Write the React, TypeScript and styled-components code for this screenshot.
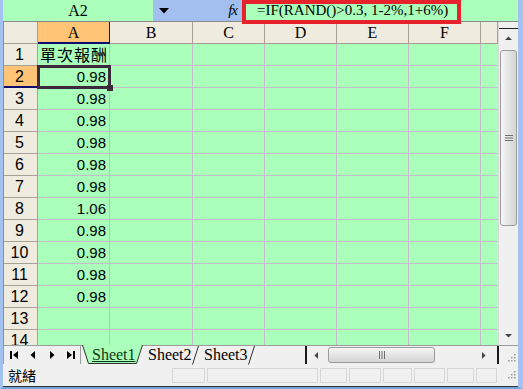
import * as React from 'react';
import styled, { createGlobalStyle, css } from 'styled-components';

const GREEN = '#aaffbb';
const GRID = '#c9bcc9';
const HEAD = '#efebde';
const HEAD_LINE = '#a5a294';
const ORANGE = '#ffc475';
const NAVY = '#0c0c70';
const FRAME = '#a4c2f0';
const BAR = '#f0f0f0';
const SERIF = '"Liberation Serif", "Noto Sans CJK TC", serif';
const SANS = '"Liberation Sans", "Noto Sans CJK TC", sans-serif';
const CJK = '"Noto Sans CJK TC", "Liberation Sans", sans-serif';

const columns = ['A', 'B', 'C', 'D', 'E', 'F', ''];
const rows = Array.from({ length: 14 }, (_, i) => i + 1);
const values: Record<number, string> = {
    1: '單次報酬',
    2: '0.98', 3: '0.98', 4: '0.98', 5: '0.98', 6: '0.98', 7: '0.98',
    8: '1.06', 9: '0.98', 10: '0.98', 11: '0.98', 12: '0.98',
};
const statusPanels = [33, 111, 27, 32, 29, 31, 27, 21];

const GlobalStyle = createGlobalStyle`
    html, body {
        margin: 0;
        padding: 0;
        background: #fff;
    }
    body {
        font-family: ${SANS};
    }
`;

const Arrow = ({ dir }: { dir: 'up' | 'down' | 'left' | 'right' }) => {
    const pts = {
        up: '0,5 3.5,1.5 7,5',
        down: '0,2 7,2 3.5,5.5',
        left: '5,0 5,7 1.5,3.5',
        right: '2,0 2,7 5.5,3.5',
    }[dir];
    return (
        <svg width="7" height="7" viewBox="0 0 7 7">
            <polygon points={pts} fill="#444" />
        </svg>
    );
};

const NavIcon = ({ kind }: { kind: 'first' | 'prev' | 'next' | 'last' }) => (
    <svg width="10" height="10" viewBox="0 0 10 10">
        {kind === 'first' && <rect x="1" y="1" width="2" height="8" fill="#000" />}
        {kind === 'first' && <polygon points="9,1 9,9 4,5" fill="#000" />}
        {kind === 'prev' && <polygon points="7,1 7,9 2.5,5" fill="#000" />}
        {kind === 'next' && <polygon points="3,1 3,9 7.5,5" fill="#000" />}
        {kind === 'last' && <polygon points="1,1 1,9 6,5" fill="#000" />}
        {kind === 'last' && <rect x="7" y="1" width="2" height="8" fill="#000" />}
    </svg>
);

const Grip = () => (
    <svg width="10" height="10" viewBox="0 0 10 10">
        {[[8, 2], [5, 5], [8, 5], [2, 8], [5, 8], [8, 8]].map(([x, y]) => (
            <rect key={`${x}-${y}`} x={x} y={y} width="1.5" height="1.5" fill="#9a9a9a" />
        ))}
    </svg>
);

const ThumbGrip = ({ vertical }: { vertical?: boolean }) => (
    <svg width={vertical ? 8 : 8} height="8" viewBox="0 0 8 8">
        {[1, 3.5, 6].map((p) =>
            vertical
                ? <rect key={p} x="0" y={p} width="8" height="1" fill="#6f6f6f" />
                : <rect key={p} x={p} y="0" width="1" height="8" fill="#6f6f6f" />
        )}
    </svg>
);

const TabShape = ({ active }: { active?: boolean }) => (
    <TabSvg width="62" height="19" viewBox="0 0 62 19">
        {active && <polygon points="0.5,0 60.5,0 54.5,18.5 6.5,18.5" fill={GREEN} />}
        {active && <polyline points="0.5,0 6.5,18.5 54.5,18.5" fill="none" stroke="#333" strokeWidth="1" />}
        <line x1="54.5" y1="18.5" x2="60.5" y2="0" stroke="#333" strokeWidth="1" />
    </TabSvg>
);

export default function App() {
    return (
        <>
            <GlobalStyle />
            <Window>
                <FormulaBar>
                    <NameBox>A2</NameBox>
                    <NameDrop>
                        <svg width="10" height="6" viewBox="0 0 10 6">
                            <polygon points="0,0 10,0 5,5.5" fill="#000" />
                        </svg>
                        <Fx>fx</Fx>
                    </NameDrop>
                    <FormulaField>=IF(RAND()&gt;0.3, 1-2%,1+6%)</FormulaField>
                    <Highlight />
                </FormulaBar>

                <SheetArea>
                    <Grid>
                        <Corner />
                        {columns.map((c, i) => (
                            <ColHead key={i} $active={c === 'A'}>{c}</ColHead>
                        ))}
                        {rows.map((r) => (
                            <React.Fragment key={r}>
                                <RowHead $active={r === 2}>{r}</RowHead>
                                {columns.map((c, i) => (
                                    <Cell
                                        key={i}
                                        $num={r > 1}
                                        $selected={r === 2 && c === 'A'}
                                        $last={c === ''}
                                    >
                                        {c === 'A' ? values[r] || '' : ''}
                                    </Cell>
                                ))}
                            </React.Fragment>
                        ))}
                    </Grid>
                    <VScroll>
                        <SplitBox />
                        <VButton><Arrow dir="up" /></VButton>
                        <VTrack>
                            <VThumb><ThumbGrip vertical /></VThumb>
                        </VTrack>
                        <VButton><Arrow dir="down" /></VButton>
                    </VScroll>
                </SheetArea>

                <TabBar>
                    <NavButtons>
                        <NavButton><NavIcon kind="first" /></NavButton>
                        <NavButton><NavIcon kind="prev" /></NavButton>
                        <NavButton><NavIcon kind="next" /></NavButton>
                        <NavButton><NavIcon kind="last" /></NavButton>
                    </NavButtons>
                    <TabStrip>
                        {['Sheet1', 'Sheet2', 'Sheet3'].map((name, i) => (
                            <Tab key={name} $active={i === 0}>
                                <TabShape active={i === 0} />
                                <TabLabel $active={i === 0}>{name}</TabLabel>
                            </Tab>
                        ))}
                    </TabStrip>
                    <SplitLine />
                    <HScroll>
                        <HButton><Arrow dir="left" /></HButton>
                        <HTrack>
                            <HThumb><ThumbGrip /></HThumb>
                        </HTrack>
                        <HButton><Arrow dir="right" /></HButton>
                    </HScroll>
                    <SplitLine />
                    <GripBox><Grip /></GripBox>
                </TabBar>

                <StatusBar>
                    <Ready>就緒</Ready>
                    {statusPanels.map((w, i) => (
                        <StatusPanel key={i} $width={w} />
                    ))}
                    <GripBox><Grip /></GripBox>
                </StatusBar>
            </Window>
        </>
    );
}

const Window = styled.div`
    width: 523px;
    height: 389px;
    box-sizing: border-box;
    border-left: 3px solid ${FRAME};
    border-right: 5px solid ${FRAME};
    border-bottom: 2px solid #6fa6df;
    display: flex;
    flex-direction: column;
    background: ${BAR};
    overflow: hidden;
`;

const FormulaBar = styled.div`
    position: relative;
    z-index: 3;
    display: flex;
    height: 22px;
    box-sizing: border-box;
    border-bottom: 1px solid #8a8a8a;
    flex-shrink: 0;
`;

const NameBox = styled.div`
    width: 150px;
    background: ${GREEN};
    font: 16px ${SERIF};
    line-height: 21px;
    text-align: center;
`;

const NameDrop = styled.div`
    width: 90px;
    background: #a2bff0;
    display: flex;
    align-items: center;
    justify-content: space-between;
    padding: 0 2px 0 6px;
    box-sizing: border-box;
`;

const Fx = styled.span`
    font: italic 15px ${SERIF};
    letter-spacing: -1px;
    padding-right: 4px;
`;

const FormulaField = styled.div`
    flex: 1;
    background: ${GREEN};
    font: 15px ${SERIF};
    line-height: 21px;
    padding-left: 14px;
    white-space: nowrap;
`;

const Highlight = styled.div`
    position: absolute;
    left: 239px;
    top: 0;
    width: 219px;
    height: 24px;
    box-sizing: border-box;
    border: 4px solid #e8222c;
    pointer-events: none;
`;

const SheetArea = styled.div`
    display: flex;
    height: 323px;
    flex-shrink: 0;
`;

const Grid = styled.div`
    width: 495px;
    box-sizing: border-box;
    border-left: 1px solid #8f8f8f;
    display: grid;
    grid-template-columns: 34px 72px 83px 72px 72px 72px 72px 17px;
    grid-auto-rows: 22px;
    overflow: hidden;
    background: ${GREEN};
`;

const headBase = css`
    box-sizing: border-box;
    background: ${HEAD};
    border-right: 1px solid ${HEAD_LINE};
    border-bottom: 1px solid ${HEAD_LINE};
`;

const Corner = styled.div`
    ${headBase}
`;

const ColHead = styled.div<{ $active?: boolean }>`
    ${headBase}
    font: 16px ${SERIF};
    line-height: 22px;
    text-align: center;
    ${(p) => p.$active && css`
        background: ${ORANGE};
        border-right-color: ${NAVY};
        border-bottom: 2px solid ${NAVY};
    `}
`;

const RowHead = styled.div<{ $active?: boolean }>`
    ${headBase}
    font: 16px ${SANS};
    line-height: 22px;
    text-align: center;
    padding-right: 2px;
    ${(p) => p.$active && css`
        background: ${ORANGE};
        border-bottom: 2px solid ${NAVY};
    `}
`;

const Cell = styled.div<{ $num?: boolean; $selected?: boolean; $last?: boolean }>`
    position: relative;
    box-sizing: border-box;
    background: ${GREEN};
    border-right: 1px solid ${(p) => (p.$last ? 'transparent' : GRID)};
    border-bottom: 1px solid ${GRID};
    font: ${(p) => (p.$num ? `15px ${SANS}` : `16px ${CJK}`)};
    line-height: 21px;
    padding: ${(p) => (p.$num ? '0 3px 0 2px' : '0 0 0 2px')};
    letter-spacing: ${(p) => (p.$num ? '0' : '1px')};
    text-align: ${(p) => (p.$num ? 'right' : 'left')};
    white-space: nowrap;
    ${(p) => p.$selected && css`
        z-index: 2;
        &::after {
            content: '';
            position: absolute;
            left: -1px;
            top: -1px;
            right: -2px;
            bottom: -2px;
            border: 3px solid #3b2a3b;
        }
        &::before {
            content: '';
            position: absolute;
            right: -4px;
            bottom: -4px;
            width: 6px;
            height: 6px;
            background: #3b2a3b;
            z-index: 1;
        }
    `}
`;

const VScroll = styled.div`
    width: 20px;
    display: flex;
    flex-direction: column;
    background: ${BAR};
    border-left: 1px solid #d8d8d8;
    box-sizing: border-box;
`;

const SplitBox = styled.div`
    height: 6px;
    border-bottom: 1px solid #222;
`;

const VButton = styled.div`
    height: 19px;
    display: flex;
    align-items: center;
    justify-content: center;
    flex-shrink: 0;
`;

const VTrack = styled.div`
    flex: 1;
    padding: 2px 1px 0 1px;
`;

const VThumb = styled.div`
    height: 176px;
    box-sizing: border-box;
    border: 1px solid #9c9c9c;
    border-radius: 3px;
    background: linear-gradient(to right, #f6f6f6, #e4e4e4 50%, #d4d4d4);
    display: flex;
    align-items: center;
    justify-content: center;
`;

const TabBar = styled.div`
    display: flex;
    height: 19px;
    box-sizing: border-box;
    border-top: 1px solid #9c9c9c;
    background: ${BAR};
    flex-shrink: 0;
`;

const NavButtons = styled.div`
    width: 78px;
    box-sizing: border-box;
    border-left: 1px solid #9c9c9c;
    border-right: 1px solid #9c9c9c;
    display: flex;
`;

const NavButton = styled.div`
    width: 19px;
    display: flex;
    align-items: center;
    justify-content: center;
`;

const TabStrip = styled.div`
    width: 224px;
    display: flex;
    padding-left: 1px;
    box-sizing: border-box;
`;

const Tab = styled.div<{ $active?: boolean }>`
    position: relative;
    width: 56px;
    height: ${(p) => (p.$active ? '19px' : '18px')};
    margin-top: ${(p) => (p.$active ? '-1px' : '0')};
    z-index: ${(p) => (p.$active ? 2 : 1)};
    flex-shrink: 0;
`;

const TabSvg = styled.svg`
    position: absolute;
    left: 0;
    top: 0;
    overflow: visible;
`;

const TabLabel = styled.span<{ $active?: boolean }>`
    position: relative;
    display: block;
    padding-left: 10px;
    font: 16px ${SERIF};
    line-height: ${(p) => (p.$active ? '19px' : '18px')};
    color: ${(p) => (p.$active ? '#0b3b12' : '#000')};
    text-decoration: ${(p) => (p.$active ? 'underline' : 'none')};
`;

const SplitLine = styled.div`
    width: 2px;
    background: #1a1a1a;
    flex-shrink: 0;
`;

const HScroll = styled.div`
    width: 190px;
    display: flex;
    padding-right: 5px;
    box-sizing: border-box;
`;

const HButton = styled.div`
    width: 18px;
    display: flex;
    align-items: center;
    justify-content: center;
`;

const HTrack = styled.div`
    flex: 1;
    padding: 1px 0 1px 3px;
`;

const HThumb = styled.div`
    width: 107px;
    height: 100%;
    box-sizing: border-box;
    border: 1px solid #9c9c9c;
    border-radius: 3px;
    background: linear-gradient(to bottom, #f6f6f6, #e4e4e4 50%, #d4d4d4);
    display: flex;
    align-items: center;
    justify-content: center;
`;

const GripBox = styled.div`
    width: 19px;
    display: flex;
    align-items: flex-end;
    justify-content: flex-end;
    padding: 0 2px 2px 0;
    box-sizing: border-box;
`;

const StatusBar = styled.div`
    display: flex;
    align-items: center;
    height: 23px;
    box-sizing: border-box;
    border-bottom: 1px solid #333;
    background: ${BAR};
    gap: 2px;
    flex-shrink: 0;
`;

const Ready = styled.div`
    flex: 1;
    padding-left: 5px;
    font: 14px ${CJK};
`;

const StatusPanel = styled.div<{ $width: number }>`
    width: ${(p) => p.$width}px;
    height: 15px;
    box-sizing: border-box;
    border: 1px solid #d6d6d6;
`;
